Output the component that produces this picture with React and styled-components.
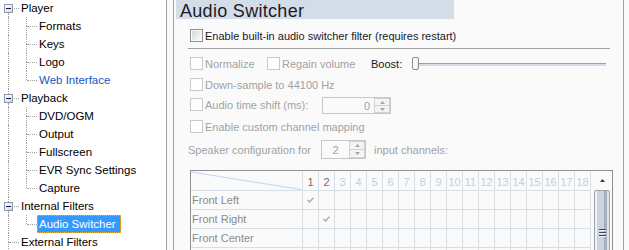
import React from "react";
import styled, { createGlobalStyle } from "styled-components";

const GlobalStyle = createGlobalStyle`
  html, body { margin: 0; padding: 0; background: #fafafa; }
  body {
    font-family: "Liberation Sans", Arial, sans-serif;
    font-size: 11px;
    overflow: hidden;
  }
`;

const Window = styled.div`
  display: flex;
  width: 629px;
  height: 250px;
  overflow: hidden;
  background: #fafafa;
`;

/* ---------------- Tree ---------------- */

const TreePane = styled.div`
  width: 166px;
  flex: none;
  height: 100%;
  background: #fff;
  border-right: 1px solid #a0a0a0;
  font-size: 11.5px;
  color: #000;
  overflow: hidden;
`;

const TreeList = styled.ul`
  list-style: none;
  margin: -1px 0 0;
  padding: 0;
`;

const TreeRow = styled.li`
  display: flex;
  height: 18px;
  align-items: flex-start;
`;

const Guide = styled.span`
  position: relative;
  width: 18px;
  height: 18px;
  flex: none;
`;

const VLine = styled.span`
  position: absolute;
  left: 8px;
  top: ${(p) => p.$from}px;
  height: ${(p) => p.$to - p.$from}px;
  border-left: 1px dotted #a0a0a0;
`;

const HLine = styled.span`
  position: absolute;
  top: 9px;
  left: ${(p) => p.$from}px;
  width: ${(p) => 19 - p.$from}px;
  border-top: 1px dotted #a0a0a0;
`;

const ToggleBox = styled.span`
  position: absolute;
  left: 4px;
  top: 5px;
  width: 9px;
  height: 9px;
  box-sizing: border-box;
  border: 1px solid #8d9aab;
  background: linear-gradient(135deg, #ffffff 0%, #e9e9e9 60%, #d2d2d2 100%);
  &::after {
    content: "";
    position: absolute;
    left: 1px;
    top: 3px;
    width: 5px;
    height: 1px;
    background: #14144a;
  }
`;

const NodeLabel = styled.span`
  margin-left: 1px;
  height: 18px;
  box-sizing: border-box;
  padding: 0 4px 0 1px;
  line-height: 16px;
  white-space: nowrap;
  border: 1px ${(p) => (p.$selected ? "dotted #f0b040" : "solid transparent")};
  background: ${(p) => (p.$selected ? "#3399ff" : "transparent")};
  color: ${(p) => (p.$selected ? "#fff" : p.$hot ? "#1a55c4" : "#000")};
`;

function GuideCell({ cell }) {
  if (cell === "pass") {
    return (
      <Guide>
        <VLine $from={0} $to={18} />
      </Guide>
    );
  }
  if (cell === "blank") return <Guide />;
  const { above, below, toggle } = cell;
  if (toggle) {
    return (
      <Guide>
        {above && <VLine $from={0} $to={5} />}
        {below && <VLine $from={14} $to={18} />}
        <HLine $from={14} />
        <ToggleBox />
      </Guide>
    );
  }
  return (
    <Guide>
      {above && <VLine $from={0} $to={9} />}
      {below && <VLine $from={9} $to={18} />}
      <HLine $from={9} />
    </Guide>
  );
}

const child = (last) => ["pass", { above: true, below: !last }];

const treeRows = [
  { text: "Player", cells: [{ above: false, below: true, toggle: true }] },
  { text: "Formats", cells: child(false) },
  { text: "Keys", cells: child(false) },
  { text: "Logo", cells: child(false) },
  { text: "Web Interface", hot: true, cells: child(true) },
  { text: "Playback", cells: [{ above: true, below: true, toggle: true }] },
  { text: "DVD/OGM", cells: child(false) },
  { text: "Output", cells: child(false) },
  { text: "Fullscreen", cells: child(false) },
  { text: "EVR Sync Settings", cells: child(false) },
  { text: "Capture", cells: child(true) },
  { text: "Internal Filters", cells: [{ above: true, below: true, toggle: true }] },
  { text: "Audio Switcher", selected: true, cells: child(true) },
  { text: "External Filters", cells: [{ above: true, below: true }] },
];

/* ---------------- Page panel ---------------- */

const Panel = styled.section`
  width: 449px;
  flex: none;
  margin-left: 6px;
  height: 100%;
  border-left: 1px solid #a0a0a0;
  border-right: 1px solid #a0a0a0;
  background: #fafafa;
  display: flex;
  flex-direction: column;
  overflow: hidden;
`;

const Header = styled.h1`
  margin: 0 0 0 2px;
  width: 278px;
  height: 19px;
  flex: none;
  box-sizing: border-box;
  padding-left: 4px;
  background: #d3dde7;
  font-family: "Liberation Sans", Arial, sans-serif;
  font-weight: normal;
  font-size: 18px;
  letter-spacing: 0.3px;
  line-height: 22px;
  color: #1f1a24;
  white-space: nowrap;
`;

const Content = styled.div`
  display: flex;
  flex-direction: column;
  padding-left: 14px;
`;

const OptionRow = styled.div`
  display: flex;
  align-items: ${(p) => (p.$top ? "flex-start" : "center")};
  height: ${(p) => p.$h}px;
  margin-top: ${(p) => p.$mt}px;
  padding-left: ${(p) => (p.$flush ? 0 : 2)}px;
  flex: none;
`;

const CheckItem = styled.label`
  display: flex;
  align-items: center;
  width: ${(p) => (p.$w ? `${p.$w}px` : "auto")};
  flex: none;
  margin-top: ${(p) => p.$mt || 0}px;
`;

const Box = styled.span`
  width: 13px;
  height: 13px;
  flex: none;
  box-sizing: border-box;
  border: 1px solid ${(p) => (p.$disabled ? "#c9c9c9" : "#8e8f8f")};
  background: ${(p) =>
    p.$disabled ? "#ffffff" : "linear-gradient(135deg, #d2d2d2 0%, #ececec 55%, #fbfbfb 100%)"};
  box-shadow: ${(p) => (p.$disabled ? "none" : "inset 0 0 0 1px #fbfbfb")};
`;

const Text = styled.span`
  margin-left: ${(p) => (p.$ml !== undefined ? p.$ml : 2)}px;
  width: ${(p) => (p.$w ? `${p.$w}px` : "auto")};
  flex: none;
  white-space: nowrap;
  color: ${(p) => (p.$disabled ? "#a2a2a2" : "#1c1826")};
`;

const Separator = styled.div`
  margin-top: 6px;
  width: 422px;
  height: 1px;
  flex: none;
  background: #a0a0a0;
`;

const Slider = styled.div`
  position: relative;
  width: 194px;
  height: 15px;
  flex: none;
`;

const Track = styled.div`
  position: absolute;
  left: 0;
  right: 0;
  top: 7px;
  height: 2px;
  border-top: 1px solid #a0a0a0;
  background: #d3dde7;
`;

const Thumb = styled.div`
  position: absolute;
  left: 0;
  top: 1px;
  width: 7px;
  height: 13px;
  box-sizing: border-box;
  border: 1px solid #8c8c8c;
  border-radius: 2px;
  background: linear-gradient(to right, #ffffff, #f0f0f0);
`;

const SpinBox = styled.div`
  display: flex;
  width: ${(p) => p.$w}px;
  height: ${(p) => p.$h}px;
  flex: none;
  box-sizing: border-box;
  border: 1px solid #c6c6c6;
  background: #fafafa;
`;

const SpinText = styled.div`
  flex: 1;
  display: flex;
  align-items: center;
  justify-content: ${(p) => p.$align};
  padding: 0 4px;
  color: #a2a2a2;
`;

const SpinButtons = styled.div`
  width: 16px;
  flex: none;
  display: flex;
  flex-direction: column;
`;

const SpinButton = styled.div`
  flex: 1;
  display: flex;
  align-items: center;
  justify-content: center;
  box-sizing: border-box;
  border: 1px solid #d2d2d2;
  margin-top: ${(p) => (p.$down ? -1 : 0)}px;
  background: #f4f4f4;
`;

/* ---------------- Mapping grid ---------------- */

const GridFrame = styled.div`
  margin: 11px 0 0 2px;
  width: 423px;
  height: 120px;
  flex: none;
  box-sizing: border-box;
  border: 1px solid #8f8f98;
  display: flex;
  background: #fafafa;
`;

const Table = styled.div`
  display: grid;
  grid-template-columns: 112px repeat(18, 16px);
  grid-template-rows: 20px;
  grid-auto-rows: 19px;
  width: 400px;
  flex: none;
  align-content: start;
`;

const Cell = styled.div`
  box-sizing: border-box;
  border-right: 1px solid #d6dee7;
  border-bottom: 1px solid #d6dee7;
  display: flex;
  align-items: center;
  justify-content: center;
`;

const Corner = styled(Cell)`
  position: relative;
  & > svg {
    position: absolute;
    inset: 0;
  }
`;

const HeadNum = styled(Cell)`
  padding-top: 3px;
  color: ${(p) => (p.$on ? "#6f6f6f" : "#c7cfd8")};
`;

const RowLabel = styled(Cell)`
  justify-content: flex-start;
  padding-left: 1px;
  color: #8b8b8b;
  white-space: nowrap;
  overflow: hidden;
`;

const ScrollBar = styled.div`
  margin-left: 3px;
  width: 16px;
  flex: none;
  display: flex;
  flex-direction: column;
`;

const ScrollUp = styled.div`
  height: 19px;
  flex: none;
  display: flex;
  align-items: center;
  justify-content: center;
`;

const ScrollThumb = styled.div`
  flex: 1;
  box-sizing: border-box;
  border: 1px solid #9aa2ae;
  border-radius: 2px 2px 0 0;
  background: linear-gradient(
    to right,
    #f1f3f6 0,
    #f1f3f6 2px,
    #cad4de 2px,
    #cad4de 9px,
    #a7aebb 9px,
    #a7aebb 12px,
    #e1e5ea 12px
  );
  display: flex;
  flex-direction: column;
  align-items: center;
  padding: 38px 0 0 1px;
  gap: 2px;
`;

const Grip = styled.span`
  width: 7px;
  height: 1px;
  background: #3e3e70;
  box-shadow: 0 1px 0 #eef1f6;
`;

const channels = Array.from({ length: 18 }, (_, i) => i + 1);
const speakers = ["Front Left", "Front Right", "Front Center", "", "", ""];
const checks = { "0-0": true, "1-1": true };

const Arrow = ({ down, color = "#a8a8a8" }) => (
  <svg width="5" height="3" viewBox="0 0 5 3">
    <polygon points={down ? "0,0 5,0 2.5,3" : "0,3 5,3 2.5,0"} fill={color} />
  </svg>
);

const Check = () => (
  <svg width="7" height="6" viewBox="0 0 7 6">
    <polyline points="0.6,3 2.6,5 6.4,0.6" fill="none" stroke="#a5a5a5" strokeWidth="1.3" />
  </svg>
);

function Spinner({ w, h, value, align }) {
  return (
    <SpinBox $w={w} $h={h}>
      <SpinText $align={align}>{value}</SpinText>
      <SpinButtons>
        <SpinButton>
          <Arrow />
        </SpinButton>
        <SpinButton $down>
          <Arrow down />
        </SpinButton>
      </SpinButtons>
    </SpinBox>
  );
}

export default function App() {
  return (
    <>
      <GlobalStyle />
      <Window>
        <TreePane>
          <TreeList>
            {treeRows.map((r) => (
              <TreeRow key={r.text}>
                {r.cells.map((c, i) => (
                  <GuideCell key={i} cell={c} />
                ))}
                <NodeLabel $selected={r.selected} $hot={r.hot}>
                  {r.text}
                </NodeLabel>
              </TreeRow>
            ))}
          </TreeList>
        </TreePane>

        <Panel>
          <Header>Audio Switcher</Header>
          <Content>
            <OptionRow $h={13} $mt={10}>
              <CheckItem>
                <Box />
                <Text>Enable built-in audio switcher filter (requires restart)</Text>
              </CheckItem>
            </OptionRow>

            <Separator />

            <OptionRow $h={15} $mt={7}>
              <CheckItem $w={77}>
                <Box $disabled />
                <Text $disabled>Normalize</Text>
              </CheckItem>
              <CheckItem $w={104}>
                <Box $disabled />
                <Text $disabled>Regain volume</Text>
              </CheckItem>
              <Text $ml={0} $w={41}>
                Boost:
              </Text>
              <Slider>
                <Track />
                <Thumb />
              </Slider>
            </OptionRow>

            <OptionRow $h={13} $mt={7}>
              <CheckItem>
                <Box $disabled />
                <Text $disabled>Down-sample to 44100 Hz</Text>
              </CheckItem>
            </OptionRow>

            <OptionRow $h={17} $mt={6} $top>
              <CheckItem $w={132} $mt={1}>
                <Box $disabled />
                <Text $disabled>Audio time shift (ms):</Text>
              </CheckItem>
              <Spinner w={69} h={17} value="0" align="flex-end" />
            </OptionRow>

            <OptionRow $h={13} $mt={6}>
              <CheckItem>
                <Box $disabled />
                <Text $disabled>Enable custom channel mapping</Text>
              </CheckItem>
            </OptionRow>

            <OptionRow $h={19} $mt={7} $flush>
              <Text $disabled $ml={0} $w={133}>
                Speaker configuration for
              </Text>
              <Spinner w={45} h={19} value="2" align="center" />
              <Text $disabled $ml={8}>
                input channels:
              </Text>
            </OptionRow>

            <GridFrame>
              <Table>
                <Corner>
                  <svg width="111" height="19" viewBox="0 0 111 19">
                    <line x1="0" y1="1" x2="110" y2="18.5" stroke="#c6d5e4" strokeWidth="1" />
                  </svg>
                </Corner>
                {channels.map((n) => (
                  <HeadNum key={n} $on={n <= 2}>
                    {n}
                  </HeadNum>
                ))}
                {speakers.map((s, ri) => (
                  <React.Fragment key={ri}>
                    <RowLabel>{s}</RowLabel>
                    {channels.map((n, ci) => (
                      <Cell key={n}>{checks[`${ri}-${ci}`] && <Check />}</Cell>
                    ))}
                  </React.Fragment>
                ))}
              </Table>
              <ScrollBar>
                <ScrollUp>
                  <Arrow color="#4a2c4e" />
                </ScrollUp>
                <ScrollThumb>
                  <Grip />
                  <Grip />
                  <Grip />
                </ScrollThumb>
              </ScrollBar>
            </GridFrame>
          </Content>
        </Panel>
      </Window>
    </>
  );
}
